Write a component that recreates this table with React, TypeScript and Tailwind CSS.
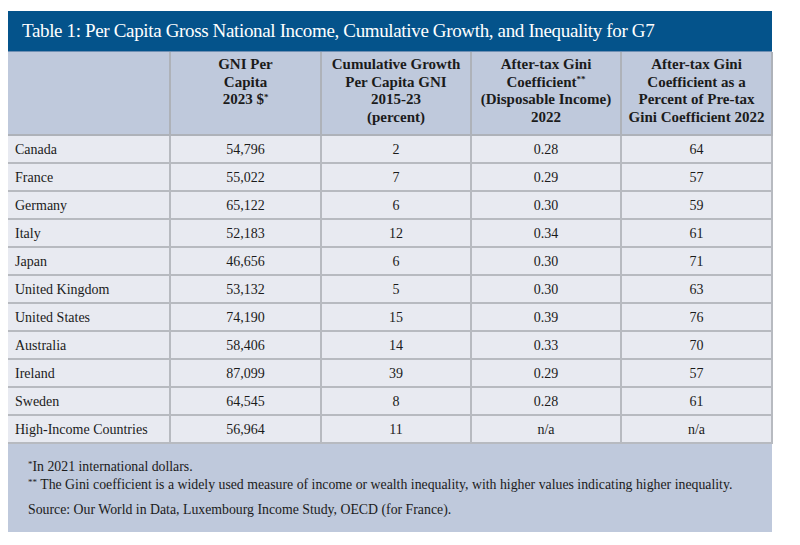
import React from 'react';

const rows = [
  ['Canada', '54,796', '2', '0.28', '64'],
  ['France', '55,022', '7', '0.29', '57'],
  ['Germany', '65,122', '6', '0.30', '59'],
  ['Italy', '52,183', '12', '0.34', '61'],
  ['Japan', '46,656', '6', '0.30', '71'],
  ['United Kingdom', '53,132', '5', '0.30', '63'],
  ['United States', '74,190', '15', '0.39', '76'],
  ['Australia', '58,406', '14', '0.33', '70'],
  ['Ireland', '87,099', '39', '0.29', '57'],
  ['Sweden', '64,545', '8', '0.28', '61'],
  ['High-Income Countries', '56,964', '11', 'n/a', 'n/a'],
];

const App: React.FC = () => {
  return (
    <div className="w-[800px] h-[545px] bg-white pt-[11px] pl-[8px] font-['Liberation_Serif',serif] text-[#1b1b1b]">
      <div className="w-[764px]">
        {/* Title */}
        <div className="h-[41px] bg-[#04538b] border-b border-[#6f8fb3] flex items-center pl-[14px] text-white text-[19px] tracking-[-0.35px]">
          Table 1: Per Capita Gross National Income, Cumulative Growth, and Inequality for G7
        </div>

        <table className="w-[764px] border-collapse table-fixed">
          <colgroup>
            <col className="w-[162px]" />
            <col className="w-[151px]" />
            <col className="w-[150px]" />
            <col className="w-[150px]" />
            <col className="w-[151px]" />
          </colgroup>
          <thead>
            <tr className="h-[83px] bg-[#bfc9dc] text-[15px] leading-[17.5px] font-bold">
              <th className="border-2 border-[#aeb2b9] border-t-0 border-l-0"></th>
              <th className="border-2 border-[#aeb2b9] border-t-0 align-top pt-[4px] px-1">
                GNI Per<br />Capita<br />2023 $<sup className="text-[9px]">*</sup>
              </th>
              <th className="border-2 border-[#aeb2b9] border-t-0 align-top pt-[4px] px-0">
                Cumulative Growth<br />Per Capita GNI<br />2015-23<br />(percent)
              </th>
              <th className="border-2 border-[#aeb2b9] border-t-0 align-top pt-[4px] px-0">
                After-tax Gini<br />Coefficient<sup className="text-[9px]">**</sup><br />(Disposable Income)<br />2022
              </th>
              <th className="border-2 border-[#aeb2b9] border-t-0 align-top pt-[4px] px-0">
                After-tax Gini<br />Coefficient as a<br />Percent of Pre-tax<br />Gini Coefficient 2022
              </th>
            </tr>
          </thead>
          <tbody>
            {rows.map((r) => (
              <tr key={r[0]} className="h-[28px] bg-[#e8eaf1] text-[14px]">
                <td className="border-2 border-[#b7bac0] border-l-0 pl-[7px]">{r[0]}</td>
                <td className="border-2 border-[#b7bac0] text-center">{r[1]}</td>
                <td className="border-2 border-[#b7bac0] text-center">{r[2]}</td>
                <td className="border-2 border-[#b7bac0] text-center">{r[3]}</td>
                <td className="border-2 border-[#b7bac0] text-center">{r[4]}</td>
              </tr>
            ))}
          </tbody>
        </table>

        {/* Notes */}
        <div className="h-[88px] bg-[#bfc9dc] pl-[20px] pt-[14px] text-[13.8px] leading-[18px]">
          <div><sup className="text-[9px]">*</sup>In 2021 international dollars.</div>
          <div><sup className="text-[9px]">**</sup> The Gini coefficient is a widely used measure of income or wealth inequality, with higher values indicating higher inequality.</div>
          <div className="mt-[7px]">Source: Our World in Data, Luxembourg Income Study, OECD (for France).</div>
        </div>
      </div>
    </div>
  );
};

export default App;
